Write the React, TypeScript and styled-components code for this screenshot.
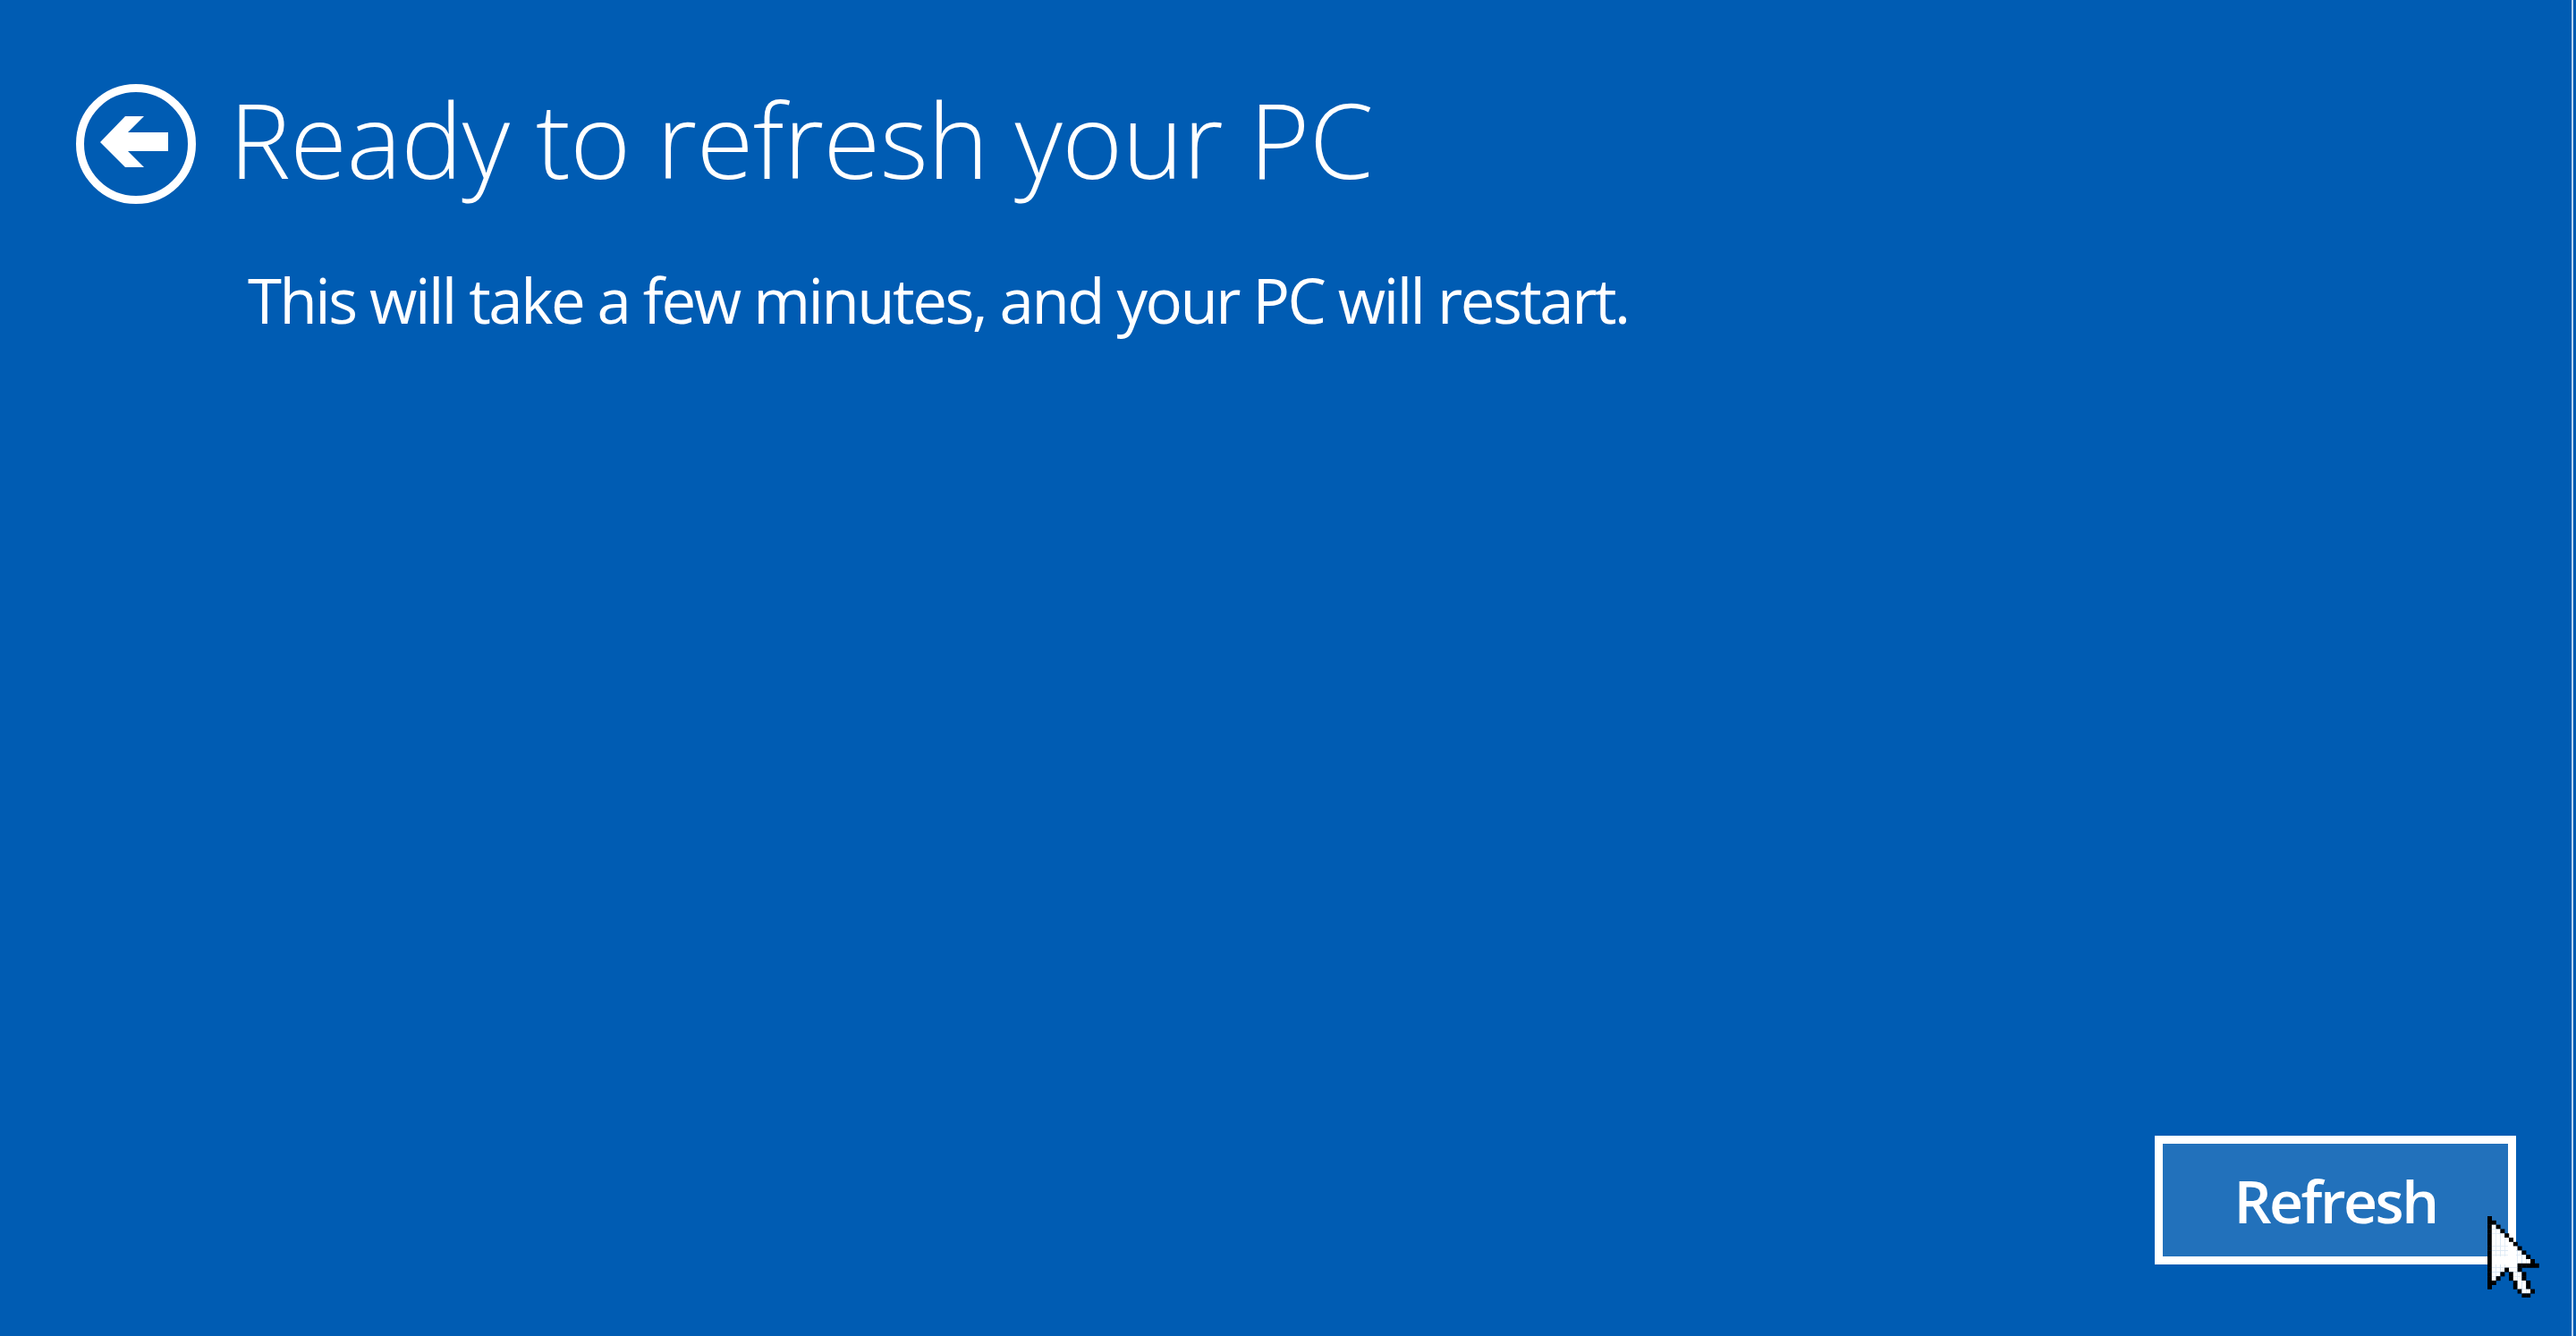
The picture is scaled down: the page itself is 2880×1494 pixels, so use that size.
import React from "react";
import styled, { createGlobalStyle } from "styled-components";

const GlobalStyle = createGlobalStyle`
  html, body {
    margin: 0;
    padding: 0;
    background: #005cb3;
    overflow: hidden;
  }
  * {
    box-sizing: border-box;
  }
`;

const Screen = styled.div`
  width: 100vw;
  height: 100vh;
  display: flex;
  flex-direction: column;
  padding: 94px 67px 80px 85px;
  background: #005cb3;
  color: #ffffff;
  font-family: "Open Sans", "Noto Sans", sans-serif;
  box-shadow: inset -3px 0 0 #005cb3, inset -5px 0 0 #b9d3ef;
`;

const Header = styled.div`
  display: flex;
  align-items: flex-start;
  gap: 37px;
`;

const BackButton = styled.button`
  width: 134px;
  height: 134px;
  padding: 0;
  border: 0;
  background: transparent;
  cursor: pointer;
  flex-shrink: 0;
  svg {
    display: block;
  }
`;

const Title = styled.h1`
  margin: 3px 0 0;
  font-size: 116px;
  line-height: 1;
  font-weight: 300;
  letter-spacing: -0.6px;
  white-space: nowrap;
`;

const Subtitle = styled.p`
  margin: 73px 0 0 192px;
  font-size: 69px;
  line-height: 1;
  font-weight: 400;
  letter-spacing: -2.5px;
  white-space: nowrap;
`;

const Spacer = styled.div`
  flex: 1;
`;

const Footer = styled.div`
  display: flex;
  justify-content: flex-end;
`;

const ButtonSlot = styled.div`
  position: relative;
`;

const PrimaryButton = styled.button`
  width: 404px;
  height: 144px;
  border: 9px solid #ffffff;
  background: #2271bb;
  color: #ffffff;
  font-family: "Open Sans", "Noto Sans", sans-serif;
  font-size: 66px;
  font-weight: 600;
  letter-spacing: -2.5px;
  line-height: 1;
  padding: 0;
  display: flex;
  align-items: center;
  justify-content: center;
  cursor: pointer;
`;

const Pointer = styled.svg`
  position: absolute;
  left: 372px;
  top: 90px;
  pointer-events: none;
`;

const cursorRows = [
  "B",
  "BB",
  "BWB",
  "BWWB",
  "BWWWB",
  "BWWWWB",
  "BWWWWWB",
  "BWWWWWWB",
  "BWWWWWWWB",
  "BWWWWWWWWB",
  "BWWWWWWWWWB",
  "BWWWWWWBBBBB",
  "BWWWBWWB",
  "BWWB BWWB",
  "BWB  BWWB",
  "BB    BWWB",
  "B     BWWB",
  "       BWWB",
  "        BB",
];

const CursorArrow = () => {
  const px = 4.8;
  const cells: React.ReactNode[] = [];
  cursorRows.forEach((row, y) => {
    row.split("").forEach((c, x) => {
      if (c === " ") return;
      cells.push(
        <rect
          key={`${x}-${y}`}
          x={x * px}
          y={y * px}
          width={px + 0.2}
          height={px + 0.2}
          fill={c === "B" ? "#000000" : "#ffffff"}
        />
      );
    });
  });
  return (
    <Pointer width={12 * px} height={19 * px} viewBox={`0 0 ${12 * px} ${19 * px}`}>
      {cells}
    </Pointer>
  );
};

const BackIcon = () => (
  <svg width="134" height="134" viewBox="0 0 134 134">
    <circle cx="67" cy="67" r="62.5" fill="none" stroke="#ffffff" strokeWidth="9" />
    <polygon
      fill="#ffffff"
      points="27,65 55,36 76,36 58,54 103,54 103,75 58,75 76,93 55,93"
    />
  </svg>
);

const App = () => (
  <>
    <GlobalStyle />
    <Screen>
      <Header>
        <BackButton aria-label="Back">
          <BackIcon />
        </BackButton>
        <Title>Ready to refresh your PC</Title>
      </Header>
      <Subtitle>This will take a few minutes, and your PC will restart.</Subtitle>
      <Spacer />
      <Footer>
        <ButtonSlot>
          <PrimaryButton>Refresh</PrimaryButton>
          <CursorArrow />
        </ButtonSlot>
      </Footer>
    </Screen>
  </>
);

export default App;
